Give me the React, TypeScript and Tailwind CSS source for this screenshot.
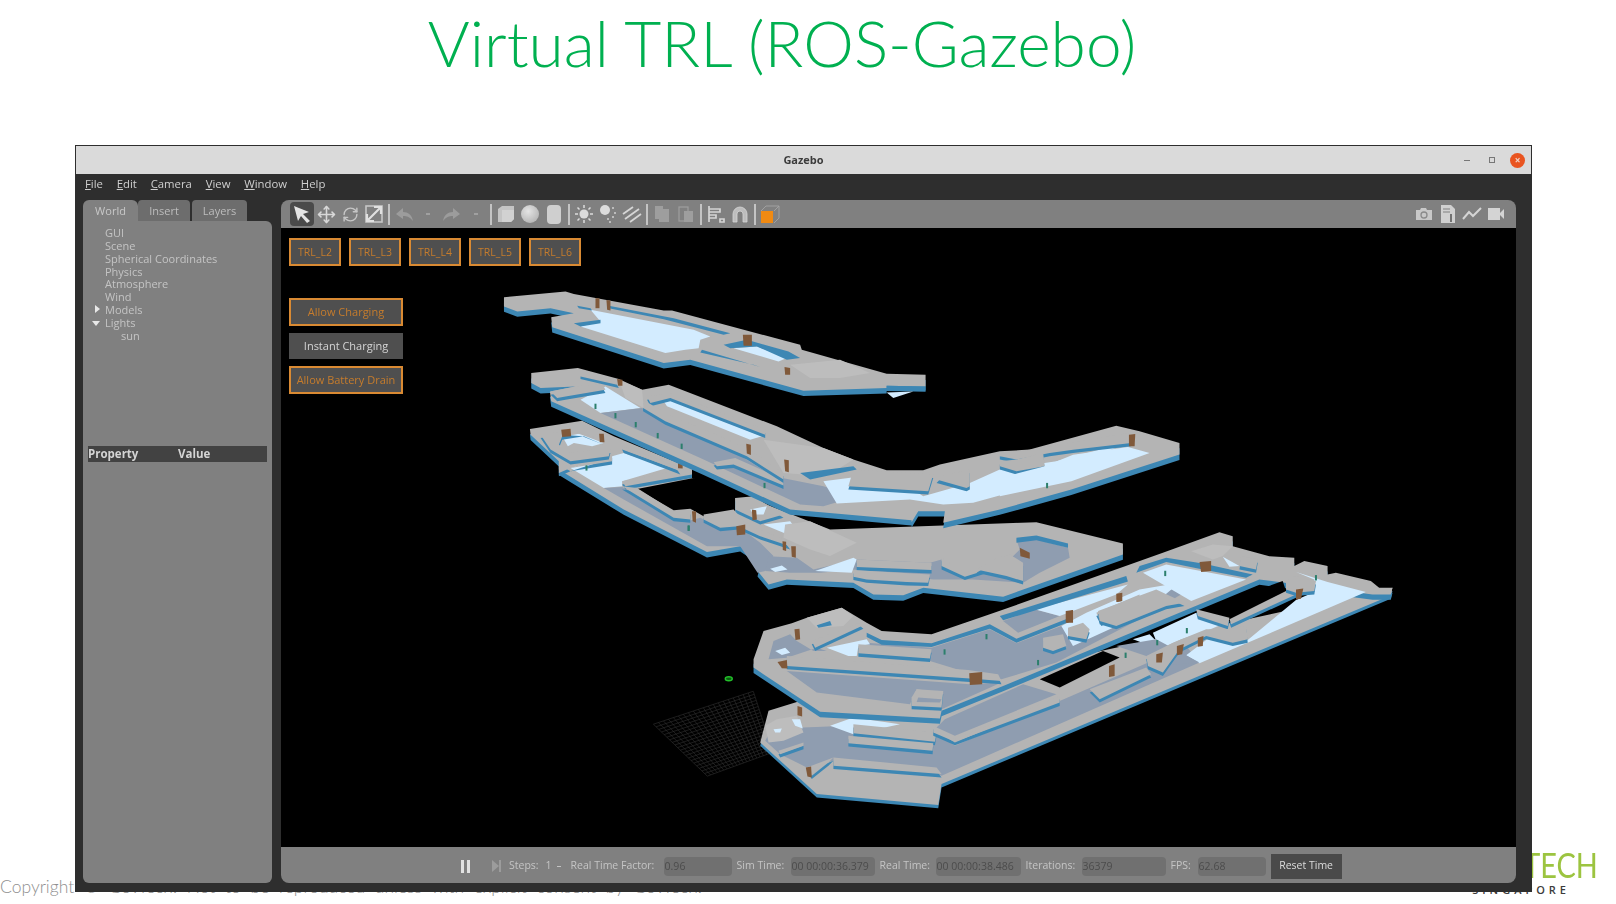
import { Move, RefreshCw } from 'lucide-react';

const Z6 = 'translate(490 280) scale(0.3333)';
const Z7 = 'translate(640 520) scale(0.3333)';
const Z8 = 'translate(1000 410) scale(0.3333)';

const W = '#b4b4b4';
const S = '#bdbdbd';
const B = '#3d87b4';
const F = '#d3ecff';
const G = '#8f9db0';
const D = '#80593a';
const T = '#2c7f6c';
const K = '#000000';

// [transform, fill, points]. A W fill also gets a blue face underneath.
const shapes: [string, string, string][] = [
  // level 2
  [Z7, W, '360,670 385,575 470,548 900,500 2260,205 2255,228 905,795 895,858 530,825'],
  [Z7, G, '375,665 420,705 500,745 580,725 890,765 905,770 1680,430 1640,380 1260,545 945,680 880,640 620,620 490,625 400,620'],
  [Z7, G, '915,600 1150,495 1250,525 945,650 890,625'],
  [Z7, F, '570,620 640,595 780,615 640,645'],
  [Z7, W, '640,615 890,640 885,668 640,642'],
  [Z7, W, '625,650 880,672 878,695 625,672'],
  [Z7, W, '580,715 890,745 905,765 580,740'],
  [Z7, W, '500,745 580,715 565,730 515,770'],
  [Z7, W, '415,695 490,670 490,680 420,705'],
  [Z7, W, '880,620 945,660 1260,530 1260,550 945,668 880,640'],
  [Z7, S, '375,620 410,600 470,590 490,640 430,665 385,670'],
  [Z7, F, '400,630 425,628 420,640 405,640'],
  [Z7, F, '455,600 480,600 488,628 465,620'],
  [Z7, D, '472,560 486,565 486,592 472,588'],
  [Z7, D, '497,745 513,742 515,775 502,772'],
  // level 3
  [Z7, W, '340,420 370,335 455,312 500,295 605,265 680,310 725,335 875,345 1050,285 1570,100 1740,38 1780,50 1780,80 1890,110 1965,115 1965,140 1995,125 2065,140 2065,165 2090,160 2195,185 2220,205 2260,205 2255,225 2200,225 1860,180 1090,500 905,575 900,598 540,578 340,445'],
  [Z7, G, '660,405 680,370 875,385 1050,330 1130,372 1290,310 1500,240 1640,180 1700,180 1500,300 1250,430 1085,480 1000,465 870,425'],
  [Z7, G, '440,455 530,520 810,555 830,510 910,520 905,570 1085,490 990,495'],
  [Z7, G, '385,420 400,365 450,345 470,365 520,395 560,395 530,385 440,415'],
  [Z7, G, '1090,305 1185,270 1260,290 1135,340'],
  [Z7, F, '1185,270 1465,195 1430,225 1260,290'],
  [Z7, F, '1265,320 1340,280 1500,210 1620,190 1500,290 1410,330 1300,380'],
  [Z7, F, '560,385 680,360 690,375 655,380 650,410 625,410'],
  [Z7, F, '405,395 435,385 450,400 425,407'],
  [Z7, B, '1080,290 1460,170 1465,186 1090,303'],
  [Z7, B, '680,340 725,362 875,372 1050,315 1130,358 1290,295 1290,307 1130,370 1050,328 875,383 725,376 680,353'],
  [Z7, W, '440,410 985,452 1075,465 1085,485 990,478 440,440'],
  [Z7, W, '655,375 875,390 870,418 655,402'],
  [Z7, W, '830,510 910,515 905,565 815,560 815,535'],
  [Z7, G, '835,535 905,540 900,550 830,548'],
  [Z7, W, '515,365 660,310 670,318 525,385'],
  [Z7, S, '500,295 605,265 640,290 610,320 530,325'],
  [Z7, B, '530,318 570,305 575,318 535,325'],
  [Z7, W, '1210,355 1270,345 1280,380 1240,395 1210,385'],
  [Z7, W, '1285,325 1330,310 1350,330 1340,360 1285,350'],
  [Z7, W, '1370,280 1500,225 1500,260 1385,310'],
  [Z7, D, '988,462 1027,458 1027,495 990,497'],
  [Z7, D, '412,428 440,422 442,448 425,447'],
  [Z7, D, '463,330 478,328 480,360 466,362'],
  [Z7, D, '1280,280 1300,272 1300,305 1282,310'],
  [Z7, D, '1432,225 1447,222 1447,245 1432,248'],
  // right end of the level 2-3 floor
  [Z8, F, '745,692 890,572 945,548 945,510 890,488 985,518 1100,548 600,762 560,738 625,688 700,708'],
  [Z8, F, '400,690 450,675 475,700 440,705'],
  [Z8, F, '460,670 590,610 680,640 620,665 545,690 480,720'],
  [Z8, F, '430,490 500,465 740,510 575,575'],
  [Z8, F, '670,442 720,470 690,472'],
  [Z8, G, '350,710 470,690 600,760 480,770 440,740'],
  [Z8, K, '120,810 310,725 360,745 180,835'],
  [Z8, K, '640,590 850,515 860,545 690,620'],
  [Z8, B, '410,490 500,458 610,480 740,505 760,495 610,462 500,445 420,470'],
  [Z8, W, '590,600 690,625 685,650 595,620'],
  [Z8, W, '690,630 860,545 890,530 890,555 695,645'],
  [Z8, W, '860,515 885,500 950,515 945,545 890,550 860,540'],
  [Z8, S, '575,425 640,405 700,410 670,440 640,450'],
  [Z8, W, '725,440 775,450 770,480 720,470'],
  [Z8, W, '440,740 520,700 620,660 680,660 740,650 745,690 700,700 620,680 540,720 490,790 445,770'],
  [Z8, W, '270,840 440,775 455,795 300,870'],
  [Z8, W, '295,605 470,540 555,580 500,590 350,650 300,635'],
  [Z8, D, '600,458 635,455 635,485 605,488'],
  [Z8, D, '890,540 912,537 905,568 890,570'],
  [Z8, D, '470,735 490,730 487,760 470,760'],
  [Z8, D, '532,710 553,704 548,735 532,738'],
  [Z8, D, '595,685 612,680 610,710 595,712'],
  [Z8, D, '328,770 345,765 345,800 328,803'],
  [Z8, D, '198,605 220,602 220,640 198,640'],
  [Z8, D, '350,553 368,550 368,575 350,578'],
  // level 4
  [Z6, W, '118,448 275,423 370,470 600,565 605,595 740,640 1020,750 1640,728 1900,792 1900,825 1540,952 1300,925 1240,948 1150,945 1090,910 890,900 835,915 802,875 810,840 750,800 650,818 400,690 205,570 205,545 120,465'],
  [Z6, F, '240,565 365,530 400,520 530,565 395,605 395,620 340,625'],
  [Z6, F, '155,475 200,530 225,515 205,495'],
  [Z6, F, '215,470 265,462 340,490 305,500 250,490 232,500'],
  [Z6, G, '340,625 395,622 590,725 630,715 690,745 750,745 810,790 850,830 825,875 802,880 750,800 650,800 400,660'],
  [Z6, F, '690,705 730,700 765,735 735,735'],
  [Z6, F, '820,735 900,725 915,745 960,760 940,785 880,760'],
  [Z7, G, '375,155 385,110 470,115 520,150 650,120 870,130 905,120 975,170 1100,130 1140,90 1130,60 1190,60 1285,85 1290,115 1200,160 1150,190 1000,180 880,180 640,150 540,160 450,160'],
  [Z7, F, '525,155 640,115 650,120 635,160'],
  [Z7, F, '390,148 425,138 442,150 405,158'],
  [Z7, W, '650,120 875,130 875,152 650,143'],
  [Z7, W, '640,152 870,165 865,190 800,188 680,180 640,172'],
  [Z7, W, '905,115 975,160 1105,115 1110,130 975,172 905,140'],
  [Z7, W, '1010,150 1100,170 1150,185 1150,130 1110,105 1060,120'],
  [Z7, B, '1130,55 1190,48 1285,72 1285,85 1190,62 1130,70'],
  [Z7, D, '1140,85 1170,100 1170,118 1142,110'],
  [Z6, W, '205,545 240,565 365,525 365,545 240,565 205,580'],
  [Z6, W, '150,465 215,455 275,460 340,485 280,460 215,470 205,495 240,520 310,510 360,510 355,530 240,545 180,510'],
  [Z6, W, '395,605 605,565 605,585 405,620'],
  [Z6, K, '440,628 610,595 800,645 780,655 735,655 735,695 640,710 600,688 550,692'],
  [Z6, W, '395,620 440,625 550,695 600,695 600,720 550,715'],
  [Z6, W, '395,500 560,560 570,575 400,510'],
  [Z6, W, '735,655 790,650 880,705 810,725 735,690'],
  [Z6, F, '780,690 830,680 820,705 790,705'],
  [Z6, W, '640,705 730,690 770,735 885,780 900,800 810,770 745,740 690,745 640,720'],
  [Z6, S, '885,735 960,725 1100,790 1020,830 960,810 880,775'],
  [Z6, D, '212,450 240,447 242,470 215,472'],
  [Z6, D, '326,462 340,462 342,488 328,488'],
  [Z6, D, '563,548 577,548 577,567 563,566'],
  [Z6, D, '605,695 617,695 617,730 607,725'],
  [Z6, D, '738,740 765,735 765,765 740,767'],
  [Z6, D, '785,690 798,692 800,720 787,722'],
  [Z6, D, '877,785 888,787 888,815 878,812'],
  [Z6, D, '903,800 917,800 917,835 905,832'],
  // level 5
  [Z6, W, '122,280 262,265 385,298 455,330 535,315 860,440 1000,505 1090,540 1190,572 1300,572 1350,555 1530,515 1620,510 1880,438 1950,455 2070,490 2070,525 1745,630 1530,690 1360,730 1365,695 1285,695 1265,728 1265,722 900,690 640,570 182,365 178,335 255,320 150,325 122,310'],
  [Z6, F, '270,360 345,320 450,385 330,400'],
  [Z6, G, '330,400 455,385 520,410 720,510 850,590 1000,620 1100,650 1000,680 930,675 640,540'],
  [Z6, F, '1000,605 1190,580 1300,650 1440,610 1530,570 1700,545 1940,480 1800,535 1540,645 1450,670 1360,675 1260,660 1040,672'],
  [Z6, F, '510,350 815,470 780,480 530,380'],
  [Z6, W, '670,548 735,535 880,600 880,618 730,555 680,560'],
  [Z6, W, '470,350 540,340 825,450 825,465 540,355 480,370'],
  [Z6, W, '458,360 525,400 770,505 880,580 880,600 770,530 525,425 458,385'],
  [Z6, W, '180,335 255,320 335,312 345,330 225,350 200,355'],
  [Z6, S, '385,300 455,330 460,385 405,355'],
  [Z6, B, '270,290 380,315 385,325 270,298'],
  [Z6, W, '1090,570 1330,585 1315,635 1075,620'],
  [Z6, W, '1350,590 1440,570 1440,620 1430,625 1340,600'],
  [Z6, S, '820,480 1000,505 1090,540 1010,590 880,580'],
  [Z6, B, '930,580 1090,560 1100,570 960,600'],
  [Z8, W, '0,130 90,120 350,75 390,70 395,100 220,120 150,130 50,150 0,140'],
  [Z8, W, '0,155 50,150 130,130 135,170 50,185 0,170'],
  [Z8, F, '0,205 135,170 220,135 385,112 450,130 215,215 0,260'],
  [Z8, D, '388,75 407,73 405,110 388,110'],
  [Z6, D, '380,298 396,300 396,318 383,318'],
  [Z6, D, '768,492 782,495 782,526 770,522'],
  [Z6, D, '882,540 896,542 896,578 885,575'],
  // level 6
  [Z6, W, '40,52 225,35 250,42 520,92 545,92 930,195 935,210 1190,282 1307,285 1307,320 1190,318 1190,325 940,333 600,240 520,250 185,142 182,112 250,100 180,85 80,95 40,80'],
  [Z6, F, '270,140 330,125 300,90 610,150 660,170 630,180 625,205 585,210 525,220'],
  [Z6, F, '730,205 800,200 890,235 865,245'],
  [Z6, F, '1190,338 1270,335 1210,355'],
  [Z6, B, '250,130 330,120 330,130 270,140'],
  [Z6, B, '260,78 300,85 305,92 265,85'],
  [Z6, B, '355,85 520,118 700,165 720,160 550,115 355,78'],
  [Z6, B, '635,210 810,262 790,255 630,218'],
  [Z6, B, '700,195 770,180 895,215 930,235 890,240 800,200 720,205'],
  [Z6, B, '1190,318 1307,320 1307,332 1190,332'],
  [Z6, S, '900,255 1050,240 1140,280 1050,295 960,295'],
  [Z6, D, '315,55 327,55 327,85 315,85'],
  [Z6, D, '348,60 360,62 360,92 350,90'],
  [Z6, D, '758,165 785,165 785,198 760,198'],
  [Z6, D, '883,262 900,265 900,285 885,285'],
];

const markers: [string, number, number][] = [
  [Z6, 315, 380], [Z6, 375, 408], [Z6, 436, 435], [Z6, 502, 468], [Z6, 574, 500], [Z6, 288, 565],
  [Z6, 595, 746], [Z6, 823, 618], [Z7, 1040, 352], [Z7, 914, 398], [Z7, 1195, 430], [Z7, 145, 26],
  [Z8, 497, 492], [Z8, 562, 664], [Z8, 473, 700], [Z8, 378, 738], [Z8, 950, 505], [Z8, 142, 228],
];

function FloorGrid() {
  const lines = [];
  const a = [653, 725];
  const b = [753, 692];
  const c = [773, 753];
  const d = [707, 777];
  const mix = (p: number[], q: number[], t: number) => [p[0] + (q[0] - p[0]) * t, p[1] + (q[1] - p[1]) * t];
  for (let i = 0; i <= 20; i++) {
    const t = i / 20;
    const p = mix(a, b, t);
    const q = mix(d, c, t);
    const r = mix(a, d, t);
    const s = mix(b, c, t);
    lines.push(<line key={'u' + i} x1={p[0]} y1={p[1]} x2={q[0]} y2={q[1]} />);
    lines.push(<line key={'v' + i} x1={r[0]} y1={r[1]} x2={s[0]} y2={s[1]} />);
  }
  return <g stroke="#303030" strokeWidth="0.6">{lines}</g>;
}

function Scene() {
  return (
    <svg viewBox="281 228 1235 620" className="block h-full w-full">
      <FloorGrid />
      <ellipse cx="728.5" cy="679.5" rx="3.5" ry="2" fill="#0b5c10" stroke="#22c02a" strokeWidth="1.4" />
      {shapes.map(([t, f, pts], i) => (
        <g key={i}>
          {/* outer slabs have a deeper blue face than inner walls */}
          {f === W && (
            <polygon transform={`${t} translate(0 ${pts.split(' ').length > 14 ? 16 : 10})`} points={pts} fill={B} />
          )}
          <polygon transform={t} points={pts} fill={f} />
        </g>
      ))}
      {markers.map(([t, x, y], i) => (
        <rect key={i} transform={t} x={x - 3} y={y - 8} width="6" height="16" fill={T} />
      ))}
    </svg>
  );
}

function ToolIcon({ children, active }: { children: React.ReactNode; active?: boolean }) {
  return (
    <div className={`flex h-6 w-6 shrink-0 items-center justify-center rounded ${active ? 'bg-[#4a4a4a]' : ''}`}>
      {children}
    </div>
  );
}

const Sep = () => <div className="mx-[2px] h-[21px] w-[2px] shrink-0 bg-[#c4c4c4]" />;

function Tiny({ children }: { children: React.ReactNode }) {
  return (
    <svg viewBox="0 0 20 20" className="h-5 w-5">
      {children}
    </svg>
  );
}

function LeftTools() {
  return (
    <div className="flex items-center pl-[9px]">
      <ToolIcon active>
        <Tiny><path d="M2 2 L17 8 L11 10 L18 17 L15 19 L9 12 L6 17 Z" fill="#e4e4e4" /></Tiny>
      </ToolIcon>
      <ToolIcon><Move size={19} color="#d8d8d8" strokeWidth={2} /></ToolIcon>
      <ToolIcon><RefreshCw size={17} color="#c6c6c6" strokeWidth={2} /></ToolIcon>
      <ToolIcon>
        <Tiny>
          <rect x="2" y="2" width="16" height="16" fill="none" stroke="#c6c6c6" strokeWidth="1.6" />
          <path d="M3 17 L17 3 M10 3 H17 V10 M3 10 V17 H10" fill="none" stroke="#e0e0e0" strokeWidth="2.2" />
        </Tiny>
      </ToolIcon>
      <Sep />
      <ToolIcon><Tiny><path d="M9 4 L2 10 L9 15 V12 C13 12 16 13 19 17 C18 11 14 8 9 8 Z" fill="#9c9c9c" /></Tiny></ToolIcon>
      <ToolIcon><div className="h-[2px] w-[4px] bg-[#a0a0a0]" /></ToolIcon>
      <ToolIcon><Tiny><path d="M11 4 L18 10 L11 15 V12 C7 12 4 13 1 17 C2 11 6 8 11 8 Z" fill="#9c9c9c" /></Tiny></ToolIcon>
      <ToolIcon><div className="h-[2px] w-[4px] bg-[#a0a0a0]" /></ToolIcon>
      <Sep />
      <ToolIcon><Tiny><path d="M2 5 L6 2 H18 V15 L15 18 H2 Z" fill="#c4c4c4" /><path d="M6 6 H18 V15 L15 18 H6 Z" fill="#d2d2d2" /></Tiny></ToolIcon>
      <ToolIcon><div className="h-[18px] w-[18px] rounded-full bg-[radial-gradient(circle_at_40%_35%,#e4e4e4,#a8a8a8)]" /></ToolIcon>
      <ToolIcon><div className="h-[19px] w-[14px] rounded-[4px] bg-[#cfcfcf]" /></ToolIcon>
      <Sep />
      <ToolIcon>
        <Tiny>
          <circle cx="10" cy="10" r="4.5" fill="#dcdcdc" />
          <path d="M10 1 V4 M10 16 V19 M1 10 H4 M16 10 H19 M3.5 3.5 L5.5 5.5 M14.5 14.5 L16.5 16.5 M3.5 16.5 L5.5 14.5 M14.5 5.5 L16.5 3.5" stroke="#dcdcdc" strokeWidth="1.5" />
        </Tiny>
      </ToolIcon>
      <ToolIcon>
        <Tiny>
          <circle cx="7" cy="6" r="5" fill="#dcdcdc" />
          <path d="M14 4 h2 M16 9 h2 M14 13 h2 M9 15 h2 M11 18 h2" stroke="#d0d0d0" strokeWidth="1.6" />
        </Tiny>
      </ToolIcon>
      <ToolIcon><Tiny><path d="M1 10 L11 3 M3 15 L17 5 M8 18 L19 10" stroke="#d6d6d6" strokeWidth="1.8" /></Tiny></ToolIcon>
      <Sep />
      <ToolIcon><Tiny><path d="M3 2 H11 V5 H17 V18 H7 V15 H3 Z" fill="#9e9e9e" /></Tiny></ToolIcon>
      <ToolIcon><Tiny><rect x="3" y="3" width="9" height="14" fill="none" stroke="#9e9e9e" strokeWidth="1.2" /><rect x="8" y="7" width="9" height="11" fill="#9e9e9e" /></Tiny></ToolIcon>
      <Sep />
      <ToolIcon><Tiny><path d="M3 2 V18 M3 5 H14 V8 H3 M3 11 H10 V14 H3 M14 15 H18 V18 H14 Z" fill="none" stroke="#d4d4d4" strokeWidth="1.7" /></Tiny></ToolIcon>
      <ToolIcon><Tiny><path d="M3 18 V10 A7 7 0 0 1 17 10 V18 H13 V10 A3 3 0 0 0 7 10 V18 Z" fill="#bdbdbd" stroke="#d6d6d6" strokeWidth="0.8" /></Tiny></ToolIcon>
      <Sep />
      <ToolIcon>
        <Tiny>
          <path d="M6 2 H19 V14 L14 19 M6 2 L1 7 M19 2 L14 7" fill="none" stroke="#a4a4a4" strokeWidth="0.9" />
          <rect x="1" y="7" width="12" height="12" fill="#f08a12" />
        </Tiny>
      </ToolIcon>
    </div>
  );
}

function RightTools() {
  return (
    <div className="flex items-center pr-[8px]">
      <ToolIcon>
        <Tiny>
          <path d="M2 6 H6 L7 4 H12 L13 6 H18 V16 H2 Z" fill="#c8c8c8" />
          <circle cx="10" cy="11" r="3" fill="none" stroke="#8a8a8a" strokeWidth="1.3" />
        </Tiny>
      </ToolIcon>
      <ToolIcon>
        <Tiny>
          <path d="M3 1 H13 L17 5 V19 H3 Z" fill="#d0d0d0" />
          <path d="M5 5 H12 M5 8 H12" stroke="#808080" strokeWidth="1.2" />
          <path d="M13 10 V18" stroke="#5a5a5a" strokeWidth="1.6" />
        </Tiny>
      </ToolIcon>
      <ToolIcon><Tiny><path d="M1 15 L7 8 L11 12 L19 4" fill="none" stroke="#d4d4d4" strokeWidth="2" /></Tiny></ToolIcon>
      <ToolIcon><Tiny><path d="M2 4 H14 V9 L18 5 V15 L14 11 V16 H2 Z" fill="#d4d4d4" /></Tiny></ToolIcon>
    </div>
  );
}

function TreeRow({ label, indent, arrow }: { label: string; indent?: boolean; arrow?: 'right' | 'down' }) {
  return (
    <div className={`relative h-[12.85px] leading-[13px] ${indent ? 'pl-[38px]' : 'pl-[22px]'}`}>
      {arrow === 'right' && <span className="absolute top-[2px] left-[12px] h-0 w-0 border-y-[4px] border-l-[5px] border-y-transparent border-l-[#e8e8e8]" />}
      {arrow === 'down' && <span className="absolute top-[5px] left-[9px] h-0 w-0 border-x-[4px] border-t-[5px] border-x-transparent border-t-[#e8e8e8]" />}
      {label}
    </div>
  );
}

function Readout({ label, value, labelW, boxW }: { label: string; value?: string; labelW: string; boxW: string }) {
  return (
    <>
      <span className={`shrink-0 text-[#c4c4c4] ${labelW}`}>{label}</span>
      <span className={`ml-[4px] mr-[5px] h-[19px] shrink-0 rounded-sm bg-[#707070] pl-[1px] leading-[19px] text-[#4c4c4c] ${boxW}`}>{value}</span>
    </>
  );
}

const orange = 'border-2 border-[#d98a33] bg-[#4f4f4f] text-[#c67c2c]';

export default function App() {
  const levels = ['TRL_L2', 'TRL_L3', 'TRL_L4', 'TRL_L5', 'TRL_L6'];
  const menu = ['File', 'Edit', 'Camera', 'View', 'Window', 'Help'];
  const tree: { label: string; indent?: boolean; arrow?: 'right' | 'down' }[] = [
    { label: 'GUI' },
    { label: 'Scene' },
    { label: 'Spherical Coordinates' },
    { label: 'Physics' },
    { label: 'Atmosphere' },
    { label: 'Wind' },
    { label: 'Models', arrow: 'right' },
    { label: 'Lights', arrow: 'down' },
    { label: 'sun', indent: true },
  ];

  return (
    <div className="relative h-[904px] w-[1616px] overflow-hidden bg-white font-['Open_Sans',sans-serif]">
      <h1 className="h-[145px] pr-[52px] text-center font-['Lato',sans-serif] text-[64px] leading-[85px] font-light text-[#00b050]">
        Virtual TRL (ROS-Gazebo)
      </h1>

      {/* slide footer, the window sits on top of it */}
      <div className="absolute inset-x-0 bottom-0 flex h-[60px] items-end justify-between pb-[5px]">
        <span className="font-['Lato',sans-serif] text-[17.5px] leading-[24px] font-light text-[#8f8f8f] [word-spacing:5px]">
          Copyright © GovTech. Not to be reproduced unless with explicit consent by GovTech.
        </span>
        <div className="mb-[4px] flex flex-col items-end leading-none">
          <span className="mr-[18px] origin-right scale-x-85 font-['Lato',sans-serif] text-[34px] leading-[30px] text-[#9cc440]">TECH</span>
          <span className="mr-[46px] mt-[4px] text-[11px] font-semibold tracking-[4px] text-[#3c3c3c]">SINGAPORE</span>
        </div>
      </div>

      <div className="relative z-10 ml-[75px] flex h-[747px] w-[1457px] flex-col border border-[#2e2e2e] bg-[#2e2e2e] blur-[0.5px]">
        <div className="relative flex h-[28px] shrink-0 items-center justify-center bg-[#dadada] text-[11px] font-bold text-[#3c3c3c]">
          Gazebo
          <div className="absolute right-[6px] flex items-center">
            <span className="mr-[19px] h-[1px] w-[6px] bg-[#777]" />
            <span className="mr-[15px] h-[6px] w-[6px] border border-[#777]" />
            <span className="flex h-[15px] w-[15px] items-center justify-center rounded-full bg-[#e95420] text-[10px] leading-none font-bold text-[#f3d5c8]">×</span>
          </div>
        </div>

        <div className="flex h-[26px] shrink-0 items-center gap-[13.75px] pb-[7px] pl-[9px] text-[11.35px] text-[#cfcfcf]">
          {menu.map((m) => (
            <span key={m}>
              <span className="underline">{m[0]}</span>
              {m.slice(1)}
            </span>
          ))}
        </div>

        <div className="flex min-h-0 flex-1 gap-[9px] pr-[15px] pb-[8px] pl-[7px]">
          <div className="flex w-[189px] shrink-0 flex-col">
            <div className="flex h-[21px] shrink-0 pt-[2px] text-[11px]">
              <div className="-mt-[2px] flex w-[55px] items-center justify-center rounded-t-md bg-[#808080] pt-[2px] text-[#c8c8c8]">World</div>
              <div className="-mt-[2px] flex w-[52px] items-center justify-center rounded-t-sm bg-[#6d6d6d] pt-[2px] text-[#bdbdbd]">Insert</div>
              <div className="-mt-[2px] ml-[2px] flex w-[55px] items-center justify-center rounded-t-sm bg-[#6d6d6d] pt-[2px] text-[#bdbdbd]">Layers</div>
            </div>
            <div className="flex flex-1 flex-col rounded-b-md rounded-tr-md bg-[#808080] text-[11px] text-[#c4c4c4]">
              <div className="h-[225px] shrink-0 pt-[5px]">
                {tree.map((r) => (
                  <TreeRow key={r.label} {...r} />
                ))}
              </div>
              <div className="mx-[5px] flex h-[16px] items-center bg-[#424242] text-[11.5px] leading-none font-bold text-[#d4d4d4]">
                <span className="w-[90px]">Property</span>
                <span>Value</span>
              </div>
            </div>
          </div>

          <div className="flex min-w-0 flex-1 flex-col">
            <div className="flex h-[28px] shrink-0 items-center justify-between rounded-t-lg bg-[#808080]">
              <LeftTools />
              <RightTools />
            </div>

            <div className="relative min-h-0 flex-1 bg-black">
              <Scene />
              <div className="absolute top-[10px] left-[8px] flex gap-[8px] text-[10.5px]">
                {levels.map((l) => (
                  <div key={l} className={`flex h-[28px] w-[52px] items-center justify-center pt-[1px] ${orange}`}>{l}</div>
                ))}
              </div>
              <div className="absolute top-[70px] left-[8px] flex w-[114px] flex-col gap-[7px] text-[11px]">
                <div className={`flex h-[28px] items-center justify-center ${orange}`}>Allow Charging</div>
                <div className="flex h-[26px] items-center justify-center bg-[#4f4f4f] text-[#d4d4d4]">Instant Charging</div>
                <div className={`flex h-[28px] items-center justify-center whitespace-nowrap ${orange}`}>Allow Battery Drain</div>
              </div>
            </div>

            <div className="flex h-[36px] shrink-0 items-center rounded-b-lg bg-[#808080] pt-[2px] pl-[180px] text-[10.5px] whitespace-nowrap">
              <div className="flex w-[9px] shrink-0 justify-between">
                <span className="h-[13px] w-[3px] bg-[#e2e2e2]" />
                <span className="h-[13px] w-[3px] bg-[#e2e2e2]" />
              </div>
              <div className="ml-[22px] flex shrink-0 items-center">
                <span className="h-0 w-0 border-y-[6px] border-l-[7px] border-y-transparent border-l-[#9c9c9c]" />
                <span className="h-[12px] w-[2px] bg-[#9c9c9c]" />
              </div>
              <span className="ml-[8px] text-[#c4c4c4]">Steps:</span>
              <span className="ml-[7px] text-[#c4c4c4]">1</span>
              <span className="ml-[5px] mr-[10px] h-[1px] w-[4px] bg-[#c4c4c4]" />
              <Readout label="Real Time Factor:" value="0.96" labelW="w-[89px]" boxW="w-[68px]" />
              <Readout label="Sim Time:" value="00 00:00:36.379" labelW="w-[50px]" boxW="w-[84px]" />
              <Readout label="Real Time:" value="00 00:00:38.486" labelW="w-[52px]" boxW="w-[85px]" />
              <Readout label="Iterations:" value="36379" labelW="w-[52px]" boxW="w-[84px]" />
              <Readout label="FPS:" value="62.68" labelW="w-[23px]" boxW="w-[68px]" />
              <div className="flex h-[25px] w-[71px] shrink-0 items-center justify-center bg-[#4a4a4a] text-[#dcdcdc]">Reset Time</div>
            </div>
          </div>
        </div>
      </div>
    </div>
  );
}
